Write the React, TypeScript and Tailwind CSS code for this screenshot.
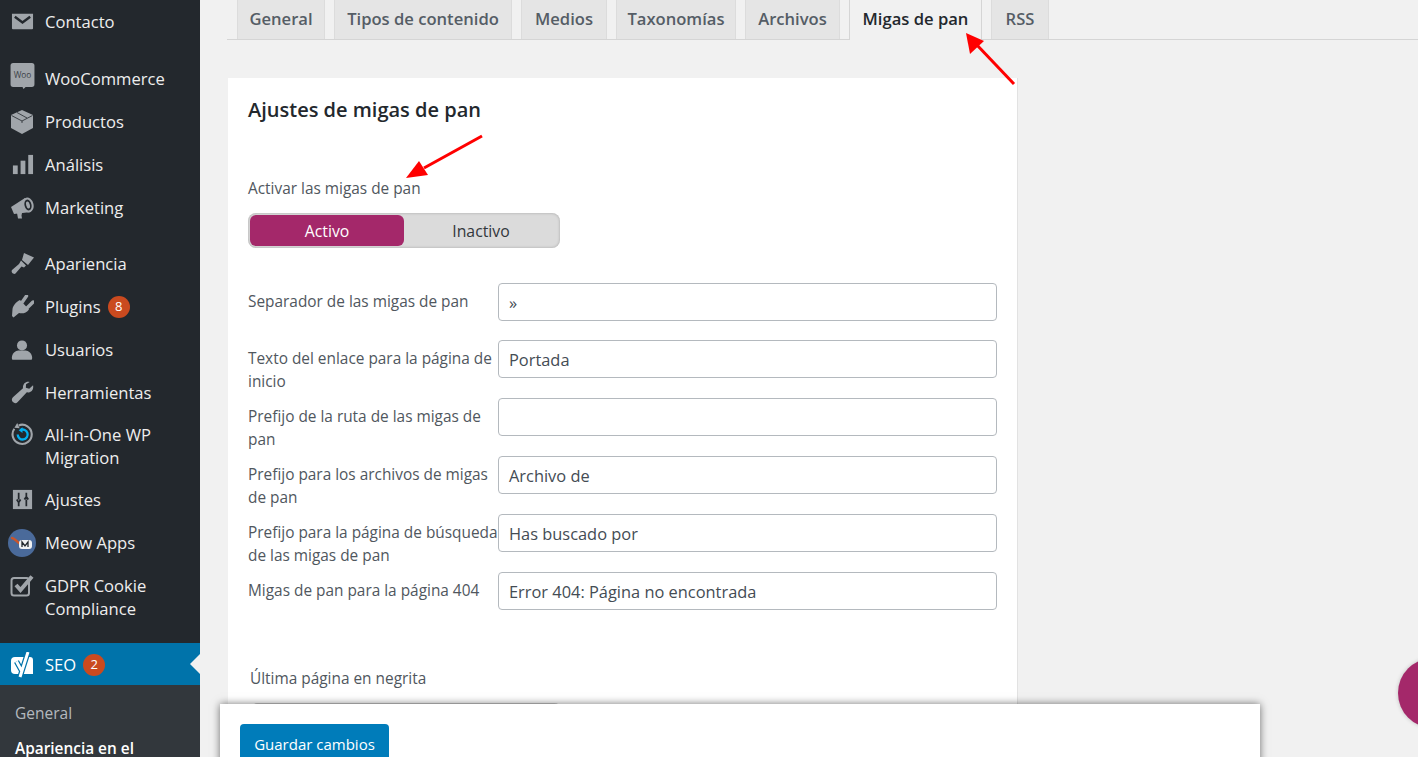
const MENU_GRAY = '#a0a5aa'

function Icon({ children, className = 'w-6 h-6' }: { children: React.ReactNode; className?: string }) {
  return (
    <svg viewBox="0 0 24 24" className={className} fill={MENU_GRAY}>
      {children}
    </svg>
  )
}

const icons = {
  mail: (
    <Icon className="w-[23px] h-[23px]">
      <path d="M1 4h22v15a1 1 0 0 1-1 1H2a1 1 0 0 1-1-1z" />
      <path d="M4 7l8 6 8-6" fill="none" stroke="#23282d" strokeWidth="2.600" />
    </Icon>
  ),
  woo: (
    <div className="-mt-[5px]">
      <svg viewBox="0 0 24 25" className="w-[25px] h-[26px]" fill={MENU_GRAY}>
        <path d="M3 0h18a2.500 2.500 0 0 1 2.500 2.500v18A2.500 2.500 0 0 1 21 23h-6l-2 2-1-2H3a2.500 2.500 0 0 1-2.500-2.500v-18A2.500 2.500 0 0 1 3 0z" />
        <text x="12" y="14" textAnchor="middle" fontSize="8" fill="#3c4248" fontFamily="Open Sans, sans-serif">Woo</text>
      </svg>
    </div>
  ),
  box: (
    <Icon>
      <path d="M12 0l11 5v13l-11 6-11-6V5z" />
      <path d="M1.500 5.500L12 11l10.500-5.500M12 11v2M7 2.500l10 5.500" stroke="#23282d" strokeWidth="0.800" fill="none" />
    </Icon>
  ),
  chart: (
    <Icon className="w-[23px] h-[23px]">
      <rect x="2" y="13" width="5" height="9" />
      <rect x="10" y="8" width="5" height="14" />
      <rect x="18" y="2" width="5" height="20" />
    </Icon>
  ),
  megaphone: (
    <Icon>
      <path d="M1 11L15 2l6 14-17 2z" />
      <path d="M7 17h5l-.5 2.500.5 3H8z" />
      <ellipse cx="18" cy="9" rx="5.500" ry="7.500" transform="rotate(-15 18 9)" />
      <ellipse cx="18" cy="9" rx="3.500" ry="5.500" transform="rotate(-15 18 9)" fill="#23282d" />
      <ellipse cx="18" cy="9" rx="1.800" ry="3.500" transform="rotate(-15 18 9)" />
    </Icon>
  ),
  brush: (
    <Icon>
      <path d="M14 1l10 4.500-6 7.500-6-5z" />
      <path d="M11 8.500l5 5-2 2-2.500-1-6 7c-1.500 1.500-5 -1-3.500-3.500l7-6z" />
    </Icon>
  ),
  plug: (
    <Icon>
      <path d="M10 5l9 9.500c-2.500 3.500-6.500 4.500-10 3.500l-5.500 4.500L2 21l.5-7C3 10.500 6 7 10 5z" />
      <path d="M12 7.500L16.500 1M17.500 12.500L23 7" fill="none" stroke={MENU_GRAY} strokeWidth="3.400" strokeLinecap="round" />
    </Icon>
  ),
  user: (
    <Icon className="w-[22px] h-[22px]">
      <circle cx="12" cy="7" r="5.500" />
      <path d="M1 20c0-4 4-7.500 7-7.500h8c3 0 7 3.500 7 7.500v1.500a1 1 0 0 1-1 1H2a1 1 0 0 1-1-1z" />
    </Icon>
  ),
  wrench: (
    <Icon className="w-[23px] h-[23px]">
      <path d="M23 4.500l-4 3.500-3.500-1 .2-3.500L19.500 1C15.500-.2 12 3 12.500 7.500L2 17c-1.500 1.500-1.500 3.500 0 5s3.500 1.500 5-.2l9.500-10c4.500 .8 7.500-3 6.500-7.300z" />
    </Icon>
  ),
  migration: (
    <svg viewBox="0 0 24 24" className="w-[23px] h-[23px]" fill="none">
      <path d="M8 2.500A10 10 0 1 1 3.500 6" stroke={MENU_GRAY} strokeWidth="2.200" />
      <path d="M6.500 0l2.500 5.500-5.500-.5z" fill={MENU_GRAY} />
      <path d="M7 12a5.200 5.200 0 1 0 3-4.700" stroke="#00aeef" strokeWidth="2.400" />
      <path d="M12 4.500v6L8 7.500z" fill="#00aeef" />
    </svg>
  ),
  settings: (
    <Icon className="w-[23px] h-[23px]">
      <path d="M2 2h20v20H2z" />
      <path d="M8 5v7M6 12l2 3 2-3M8 15v4M16 19v-7M14 12l2-3 2 3M16 9V5" fill="none" stroke="#23282d" strokeWidth="1.800" />
    </Icon>
  ),
  meow: (
    <svg viewBox="0 0 28 28" className="w-[28px] h-[28px]">
      <circle cx="14" cy="14" r="14" fill="#4a6a9a" />
      <path d="M4 9c3 .5 4 3 7 5" fill="none" stroke="#c9552b" strokeWidth="2.400" strokeLinecap="round" />
      <rect x="11" y="11" width="13" height="9" rx="3" fill="#f2f2f2" />
      <path d="M14 18v-5l3 4 3-4v5" fill="none" stroke="#23282d" strokeWidth="1.300" />
    </svg>
  ),
  check: (
    <svg viewBox="0 0 24 24" className="w-6 h-6" fill="none">
      <rect x="1.500" y="4" width="17.500" height="17.500" rx="2.500" stroke={MENU_GRAY} strokeWidth="2" />
      <path d="M6 11l4.500 5L22 2.500" stroke={MENU_GRAY} strokeWidth="4" />
    </svg>
  ),
  yoast: (
    <svg viewBox="0 0 24 26" className="w-6 h-[26px]" fill="none">
      <path d="M5 5h15a3 3 0 0 1 3 3v14H5a4 4 0 0 1-4-4V9a4 4 0 0 1 4-4z" fill="#fff" />
      <path d="M18 0l-8 25M6.500 9.500l5 9" stroke="#0073aa" strokeWidth="5.500" />
      <path d="M18 0l-8 25M6.500 9.500l5 9" stroke="#fff" strokeWidth="3" />
    </svg>
  ),
}

function MenuItem({ icon, label, badge, className = '' }: { icon: React.ReactNode; label: React.ReactNode; badge?: string; className?: string }) {
  return (
    <div className={`flex items-center text-[#eeeeee] text-[16.600px] leading-[23px] ${className}`}>
      <div className="w-[45px] flex-shrink-0 flex justify-center pr-[1px]">{icon}</div>
      <span>{label}</span>
      {badge && <Badge>{badge}</Badge>}
    </div>
  )
}

function Badge({ children }: { children: string }) {
  return (
    <span className="ml-[7px] w-[22px] h-[22px] rounded-full bg-[#ca4a1f] text-white text-[13px] flex items-center justify-center">
      {children}
    </span>
  )
}

function Sidebar() {
  return (
    <aside className="w-[200px] flex-shrink-0 bg-[#23282d]">
      <MenuItem icon={icons.mail} label="Contacto" className="h-[43px]" />
      <MenuItem icon={icons.woo} label="WooCommerce" className="h-[43px] mt-[14px]" />
      <MenuItem icon={icons.box} label="Productos" className="h-[43px]" />
      <MenuItem icon={icons.chart} label="Análisis" className="h-[43px]" />
      <MenuItem icon={icons.megaphone} label="Marketing" className="h-[43px]" />
      <MenuItem icon={icons.brush} label="Apariencia" className="h-[43px] mt-[13px]" />
      <MenuItem icon={icons.plug} label="Plugins" badge="8" className="h-[43px]" />
      <MenuItem icon={icons.user} label="Usuarios" className="h-[43px]" />
      <MenuItem icon={icons.wrench} label="Herramientas" className="h-[43px]" />
      <MenuItem icon={icons.migration} label={<>All-in-One WP<br />Migration</>} className="h-[64px] !items-start pt-[9px]" />
      <MenuItem icon={icons.settings} label="Ajustes" className="h-[43px]" />
      <MenuItem icon={icons.meow} label="Meow Apps" className="h-[43px]" />
      <MenuItem icon={icons.check} label={<>GDPR Cookie<br />Compliance</>} className="h-[65px] !items-start pt-[10px]" />
      <div className="relative flex items-center h-[42px] mt-[14px] pt-[2px] bg-[#0073aa] text-white text-[16.600px]">
        <div className="w-[45px] flex justify-center pr-[1px]">{icons.yoast}</div>
        <span>SEO</span>
        <Badge>2</Badge>
        <div className="absolute right-0 top-[11px] border-y-[10px] border-y-transparent border-r-[10px] border-r-[#f1f1f1]" />
      </div>
      <div className="bg-[#32373c] h-[80px] px-[15px] pt-[17px] text-[15.500px] leading-[23px]">
        <div className="text-[#b4b9be]">General</div>
        <div className="text-white font-semibold text-[15.400px] mt-[12px]">Apariencia en el</div>
      </div>
    </aside>
  )
}

const TABS = [
  { label: 'General', width: 'w-[88px]' },
  { label: 'Tipos de contenido', width: 'w-[178px]' },
  { label: 'Medios', width: 'w-[86px]' },
  { label: 'Taxonomías', width: 'w-[120px]' },
  { label: 'Archivos', width: 'w-[95px]' },
  { label: 'Migas de pan', width: 'w-[133px]', active: true },
  { label: 'RSS', width: 'w-[58px]' },
]

function Tabs() {
  return (
    <div className="flex gap-[9px] h-[40px] ml-[27px] pl-[10px] border-b border-[#d5d5d5]">
      {TABS.map(t => (
        <div
          key={t.label}
          className={`${t.width} flex items-center justify-center border-x text-[16.600px] font-semibold ${
            t.active
              ? 'h-[40px] pb-[1px] bg-[#f1f1f1] border-[#d5d5d5] text-[#23282d]'
              : 'h-[39px] bg-[#e5e5e5] border-[#dcdcdc] text-[#555d66]'
          }`}
        >
          {t.label}
        </div>
      ))}
    </div>
  )
}

const FIELDS = [
  { label: 'Separador de las migas de pan', value: '»', row: 'h-[57px]' },
  { label: 'Texto del enlace para la página de inicio', value: 'Portada', row: 'h-[58px]' },
  { label: 'Prefijo de la ruta de las migas de pan', value: '', row: 'h-[58px]' },
  { label: 'Prefijo para los archivos de migas de pan', value: 'Archivo de', row: 'h-[58px]' },
  { label: 'Prefijo para la página de búsqueda de las migas de pan', value: 'Has buscado por', row: 'h-[58px]' },
  { label: 'Migas de pan para la página 404', value: 'Error 404: Página no encontrada', row: 'h-[58px]' },
]

function Toggle() {
  return (
    <div className="w-[312px] h-[35px] rounded-[8px] bg-[#dbdbdb] p-[2px] flex shadow-[inset_0_0_3px_rgba(0,0,0,0.25)] text-[15.800px]">
      <div className="w-[154px] pt-px rounded-[6px] bg-[#a4286a] text-white flex items-center justify-center">Activo</div>
      <div className="flex-1 pt-px text-[#32373c] flex items-center justify-center">Inactivo</div>
    </div>
  )
}

function Card() {
  return (
    <section className="w-[790px] h-[800px] ml-[28px] mt-[38px] bg-white border-r border-[#e2e2e2] pt-[18px] px-[20px] text-[#50575e] text-[15.400px] leading-[23px]">
      <h2 className="text-[20px] leading-[27px] font-semibold text-[#23282d]">Ajustes de migas de pan</h2>
      <p className="mt-[54px]">Activar las migas de pan</p>
      <div className="mt-[13px]"><Toggle /></div>
      <div className="mt-[35px]">
        {FIELDS.map(f => (
          <div key={f.label} className={`flex ${f.row}`}>
            <label className="w-[250px] flex-shrink-0 pt-[7px]">{f.label}</label>
            <div className="w-[500px] h-[38px] bg-white border border-[#b4b9be] rounded-[4px] px-[10px] flex items-center text-[16.400px] text-[#444c54]">{f.value}</div>
          </div>
        ))}
      </div>
      <p className="mt-[37px] ml-[2px]">Última página en negrita</p>
      <div className="mt-[13px] ml-[2px]"><Toggle /></div>
    </section>
  )
}

export default function App() {
  return (
    <div className="relative flex h-[757px] overflow-hidden bg-[#f1f1f1] font-['Open_Sans',sans-serif]">
      <Sidebar />
      <main className="flex-1">
        <Tabs />
        <Card />
      </main>

      {/* save bar */}
      <div className="absolute left-[220px] top-[704px] w-[1040px] h-[80px] bg-white px-[20px] pt-[20px] shadow-[0_0_8px_rgba(0,0,0,0.55)]">
        <button className="w-[149px] h-[40px] rounded-[4px] bg-[#007cba] text-white text-[15px]">Guardar cambios</button>
      </div>

      {/* floating help button */}
      <div className="absolute left-[1398px] top-[658px] w-[70px] h-[70px] rounded-full bg-[#a4286a] shadow-[0_0_4px_rgba(0,0,0,0.2)]" />

      {/* annotation arrows */}
      <svg className="absolute left-[950px] top-[20px]" width="80" height="80" viewBox="950 20 80 80">
        <path d="M1014 84L976 44" stroke="#ff0000" strokeWidth="3" />
        <path d="M966 33l18 8-14 13z" fill="#ff0000" />
      </svg>
      <svg className="absolute left-[395px] top-[125px]" width="100" height="60" viewBox="395 125 100 60">
        <path d="M482 136L424 168" stroke="#ff0000" strokeWidth="3" />
        <path d="M406 178l13-17 9 14z" fill="#ff0000" />
      </svg>
    </div>
  )
}
